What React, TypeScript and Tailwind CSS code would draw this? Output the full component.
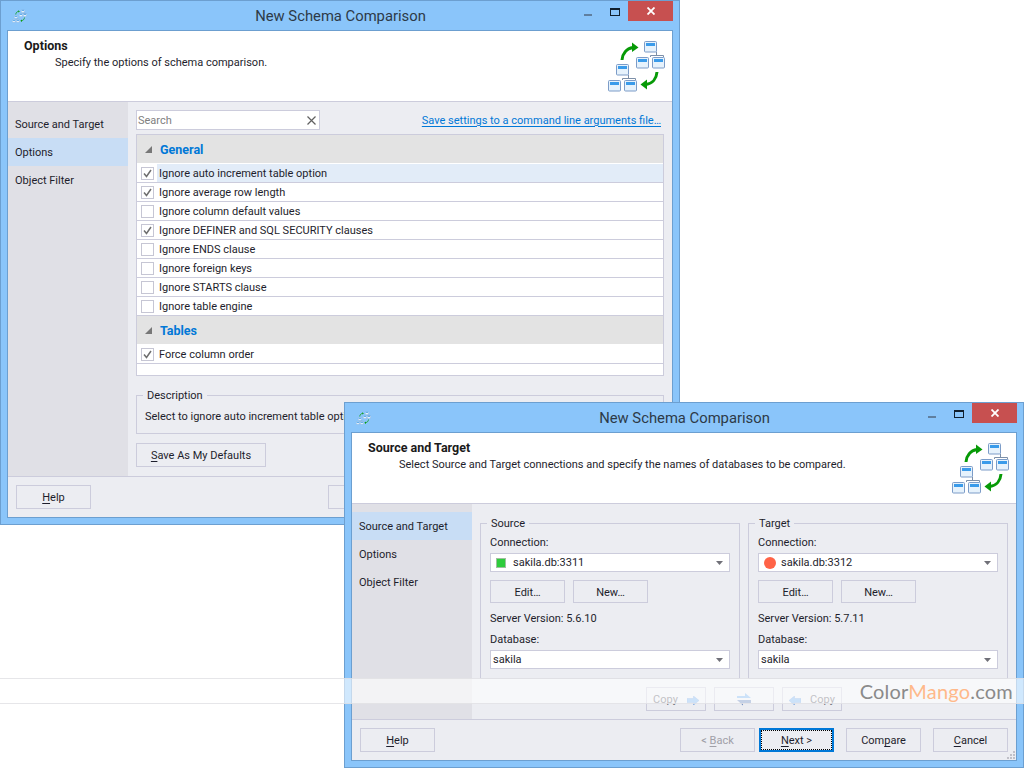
import React from "react";

function Node({ x, y }: { x: number; y: number }) {
  return (
    <g>
      <rect x={x + 0.5} y={y + 0.5} width={12} height={10.5} rx={1} fill="#e6f2fc" stroke="#7c9cc8" />
      <rect x={x + 2} y={y + 2} width={9} height={3} fill="#3a9bea" />
    </g>
  );
}

function Tree({ x, y }: { x: number; y: number }) {
  return (
    <g>
      <path d={`M${x + 20.5} ${y + 11}V${y + 14.5}M${x + 14.5} ${y + 16}V${y + 14.5}H${x + 27.5}V${y + 16}`} fill="none" stroke="#7c8fa8" />
      <Node x={x + 8} y={y} />
      <Node x={x} y={y + 16} />
      <Node x={x + 16} y={y + 16} />
    </g>
  );
}

function SchemaIcon({ className }: { className: string }) {
  return (
    <svg viewBox="0 0 60 52" className={className}>
      <Tree x={1} y={24} />
      <Tree x={29} y={1} />
      <path d="M15 20C15.500 13.500 19.500 8.500 26 7.500" fill="none" stroke="#079a07" strokeWidth={3} />
      <path d="M25 2.500L31.500 7.500L25 12Z" fill="#079a07" />
      <path d="M50 32C49.500 38.500 45.500 43.500 39 44.500" fill="none" stroke="#079a07" strokeWidth={3} />
      <path d="M40 39.500L33.500 44.500L40 49.500Z" fill="#079a07" />
    </svg>
  );
}

function Btn({ w = "w-[75px]", children, dim, focus, faint }: { w?: string; children: React.ReactNode; dim?: boolean; focus?: boolean; faint?: boolean }) {
  return (
    <div
      className={`${w} h-6 pt-[3px] flex items-center justify-center border ${focus ? "border-[#0078d7] border-2 outline-1 outline-dotted outline-black outline-offset-[-3px]" : "border-[#ccccdc]"} ${faint ? "text-[#666670]" : dim ? "text-[#a0a0a8]" : "text-[#1e1e2c]"}`}
    >
      {children}
    </div>
  );
}

function U({ children }: { children: string }) {
  return <span className="underline underline-offset-2">{children}</span>;
}

function TitleBar() {
  return (
    <div className="h-[29px] flex items-start">
      <SchemaIcon className="w-[15px] h-[14px] ml-[4px] mt-[8px]" />
      <div className="flex-1 text-center text-[14.8px] leading-[31px] text-[#2d3a48] pl-[76px] pr-[6px]">New Schema Comparison</div>
      <div className="w-[8px] h-[2px] bg-[#5f7f9f] mt-[13px] mr-[18px]" />
      <div className="w-[10px] h-[8px] border border-t-2 border-[#10202e] mt-[7px] mr-[8px]" />
      <div className="w-[45px] h-[20px] bg-[#c75050] -mr-px flex items-center justify-center">
        <svg viewBox="0 0 8 8" className="w-[8px] h-[8px]"><path d="M0.500 0.500L7.500 7.500M7.500 0.500L0.500 7.500" stroke="#fff" strokeWidth={1.800} /></svg>
      </div>
    </div>
  );
}

function Header({ title, sub }: { title: string; sub: string }) {
  return (
    <div className="h-[71px] bg-white border-b border-[#ccccdc] flex justify-between pl-[16px] pr-[5px]">
      <div className="pt-[7px] leading-[16px]">
        <div className="font-bold text-[12.5px] text-[#1a1a1a]">{title}</div>
        <div className="pl-[31px] mt-[1px] text-[#1e1e2c]">{sub}</div>
      </div>
      <SchemaIcon className="w-[60px] h-[52px] mt-[9px]" />
    </div>
  );
}

function Sidebar({ active }: { active: number }) {
  return (
    <div className="w-[120px] shrink-0 bg-[#e0e0e6] pt-[8px] text-[#1e1e2c]">
      {["Source and Target", "Options", "Object Filter"].map((t, i) => (
        <div key={t} className={`h-[28px] pl-[7px] pt-[3px] flex items-center ${i === active ? "bg-[#c8ddf5]" : ""}`}>{t}</div>
      ))}
    </div>
  );
}

function GroupHead({ t }: { t: string }) {
  return (
    <div className="h-[29px] bg-[#e3e3e3] border-b border-white flex items-center pl-[8px]">
      <svg viewBox="0 0 7 7" className="w-[7px] h-[7px]"><path d="M7 0V7H0Z" fill="#777" /></svg>
      <span className="ml-[8px] pt-[2px] font-bold text-[12.5px] text-[#0078d7]">{t}</span>
    </div>
  );
}

function Row({ t, c, hi }: { t: string; c?: boolean; hi?: boolean }) {
  return (
    <div className="h-[19px] border-b border-[#ccccdc] flex bg-white">
      <div className="w-[20px] shrink-0 flex items-center justify-center">
        <div className="w-[13px] h-[13px] border border-[#c6c6d4] flex items-center justify-center">
          {c && <svg viewBox="0 0 11 11" className="w-[11px] h-[11px]"><path d="M2 5.500L4.500 8.500L9 2" fill="none" stroke="#6e6e6e" strokeWidth={1.500} /></svg>}
        </div>
      </div>
      <div className={`flex-1 pl-[2px] leading-[20px] text-[#1e1e2c] ${hi ? "bg-[#e2ecf8]" : ""}`}>{t}</div>
    </div>
  );
}

function Combo({ children }: { children: React.ReactNode }) {
  return (
    <div className="h-[19px] w-[240px] bg-white border border-[#ccccdc] flex items-center text-[#1e1e2c]">
      <div className="flex-1 flex items-center pl-[2px]">{children}</div>
      <svg viewBox="0 0 7 4" className="w-[7px] h-[4px] mr-[6px]"><path d="M0 0H7L3.500 4Z" fill="#707078" /></svg>
    </div>
  );
}

function Conn({ title, version, swatch, name }: { title: string; version: string; swatch: React.ReactNode; name: string }) {
  return (
    <fieldset className="w-[260px] h-[164px] border border-[#ccccdc]">
      <legend className="ml-[6px] px-[4px] leading-[16px] text-[#1e1e2c]"><span className="block translate-y-px">{title}</span></legend>
      <div className="px-[9px] text-[#1e1e2c]">
        <div className="leading-[16px] mt-[4px]">Connection:</div>
        <div className="mt-[2px]">
          <Combo>
            <div className="w-[18px] pl-[3px] flex items-center">{swatch}</div>
            <span className="ml-[2px] pt-[2px]">{name}</span>
          </Combo>
        </div>
        <div className="flex gap-[8px] mt-[8px] [&>div]:h-[23px]">
          <Btn>Edit…</Btn>
          <Btn>New…</Btn>
        </div>
        <div className="leading-[16px] mt-[8px]">{version}</div>
        <div className="leading-[16px] mt-[5px]">Database:</div>
        <div className="mt-[2px]"><Combo><span className="pt-[2px]">sakila</span></Combo></div>
      </div>
    </fieldset>
  );
}

function Arrow({ left }: { left?: boolean }) {
  return (
    <svg viewBox="0 0 12 9" className={`w-[12px] h-[9px] ${left ? "rotate-180" : ""}`}>
      <path d="M0 2.500H6.500V0L12 4.500L6.500 9V6.500H0Z" fill="#7fb6f0" stroke="#6f9cdc" strokeWidth={0.500} />
    </svg>
  );
}

export default function App() {
  return (
    <div className="relative w-[1024px] h-[768px] overflow-hidden bg-white font-['Roboto',sans-serif] text-[11px]">
      {/* first window */}
      <div className="absolute left-0 top-0 w-[680px] h-[525px] border border-[#6c9fd0] bg-[#8ac5fa] px-[7px] pb-[6px] flex flex-col">
        <TitleBar />
        <div className="flex-1 flex flex-col border border-[#6c9fd0] bg-[#ecedf2] -mx-px">
          <Header title="Options" sub="Specify the options of schema comparison." />
          <div className="flex-1 flex min-h-0">
            <Sidebar active={1} />
            <div className="flex-1 px-[8px] pt-[8px]">
              <div className="flex items-center justify-between h-[20px]">
                <div className="w-[184px] h-[20px] bg-white border border-[#ccccdc] flex items-center justify-between pl-[1px] pr-[3px] text-[#808080]">
                  <span className="pt-[2px]">Search</span>
                  <svg viewBox="0 0 9 9" className="w-[9px] h-[9px]"><path d="M0.500 0.500L8.500 8.500M8.500 0.500L0.500 8.500" stroke="#606060" strokeWidth={1.200} /></svg>
                </div>
                <span className="text-[#0078d7] underline underline-offset-2 pr-[3px] pt-[2px]">Save settings to a command line arguments file…</span>
              </div>
              <div className="mt-[4px] h-[242px] border border-[#ccccdc] bg-white">
                <GroupHead t="General" />
                <Row t="Ignore auto increment table option" c hi />
                <Row t="Ignore average row length" c />
                <Row t="Ignore column default values" />
                <Row t="Ignore DEFINER and SQL SECURITY clauses" c />
                <Row t="Ignore ENDS clause" />
                <Row t="Ignore foreign keys" />
                <Row t="Ignore STARTS clause" />
                <Row t="Ignore table engine" />
                <GroupHead t="Tables" />
                <Row t="Force column order" c />
              </div>
              <fieldset className="mt-[11px] h-[47px] border border-[#ccccdc]">
                <legend className="ml-[6px] px-[4px] leading-[16px] text-[#1e1e2c]"><span className="block translate-y-px">Description</span></legend>
                <div className="pl-[8px] pt-[6px] leading-[16px] text-[#1e1e2c]">Select to ignore auto increment table option.</div>
              </fieldset>
              <div className="mt-[9px]">
                <Btn w="w-[130px]"><span><U>S</U>ave As My Defaults</span></Btn>
              </div>
            </div>
          </div>
          <div className="h-[41px] border-t border-[#ccccdc] px-[8px] pt-[8px] flex">
            <Btn><span><U>H</U>elp</span></Btn>
            <div className="flex-1" />
            <div className="flex gap-[12px]">
              <Btn dim>&lt; Back</Btn>
              <Btn>Next &gt;</Btn>
              <Btn>Compare</Btn>
              <Btn>Cancel</Btn>
            </div>
          </div>
        </div>
      </div>

      {/* second window */}
      <div className="absolute left-[344px] top-[402px] w-[680px] h-[366px] border border-[#6c9fd0] bg-[#8ac5fa] px-[7px] pb-[6px] flex flex-col">
        <TitleBar />
        <div className="flex-1 flex flex-col border border-[#6c9fd0] bg-[#ecedf2] -mx-px relative">
          <Header title="Source and Target" sub="Select Source and Target connections and specify the names of databases to be compared." />
          <div className="flex-1 flex min-h-0">
            <Sidebar active={0} />
            <div className="flex-1 px-[8px] pt-[11px]">
              <div className="flex gap-[8px]">
                <Conn title="Source" version="Server Version: 5.6.10" name="sakila.db:3311" swatch={<div className="w-[10px] h-[10px] bg-[#2ecc3c] border border-[#9fbf9f]" />} />
                <Conn title="Target" version="Server Version: 5.7.11" name="sakila.db:3312" swatch={<div className="w-[12px] h-[12px] rounded-full bg-[#ff6347]" />} />
              </div>
              <div className="flex justify-center gap-[8px] mt-[8px]">
                <Btn w="w-[60px]" faint><span className="flex items-center gap-[9px]">Copy <Arrow /></span></Btn>
                <Btn w="w-[60px]" faint>
                  <svg viewBox="0 0 14 13" className="w-[14px] h-[13px] -mt-[3px]">
                    <path d="M0 3H8V0L14 5H0Z" fill="#7fb6f0" />
                    <path d="M14 7H0L6 12.500V10H14Z" fill="#6f8cc0" />
                  </svg>
                </Btn>
                <Btn w="w-[60px]" faint><span className="flex items-center gap-[9px]"><Arrow left /> Copy</span></Btn>
              </div>
            </div>
          </div>
          <div className="h-[41px] border-t border-[#ccccdc] px-[8px] pt-[8px] flex">
            <Btn><span><U>H</U>elp</span></Btn>
            <div className="flex-1" />
            <div className="flex">
              <Btn dim><span>&lt; <U>B</U>ack</span></Btn>
              <div className="w-[4px]" />
              <Btn focus><span><U>N</U>ext &gt;</span></Btn>
              <div className="w-[12px]" />
              <Btn><span>Com<U>p</U>are</span></Btn>
              <div className="w-[12px]" />
              <Btn><span><U>C</U>ancel</span></Btn>
            </div>
          </div>
          <svg viewBox="0 0 8 8" className="absolute right-[1px] bottom-[1px] w-[8px] h-[8px]">
            <path d="M6 0h2v2H6zM3 3h2v2H3zM6 3h2v2H6zM0 6h2v2H0zM3 6h2v2H3zM6 6h2v2H6z" fill="#c0c0c8" />
          </svg>
        </div>
      </div>

      {/* watermark band */}
      <div className="absolute left-0 right-0 top-[678px] h-[26px] bg-white/60 border-y border-[#dcdce0]/70 flex items-center justify-end pr-[11px]">
        <span className="text-[20px] leading-[24px] font-['Lato',sans-serif] text-[#8a8a8a] tracking-[0.2px]">Color<span className="text-[#ffb98a]">Mango</span>.com</span>
      </div>
    </div>
  );
}
